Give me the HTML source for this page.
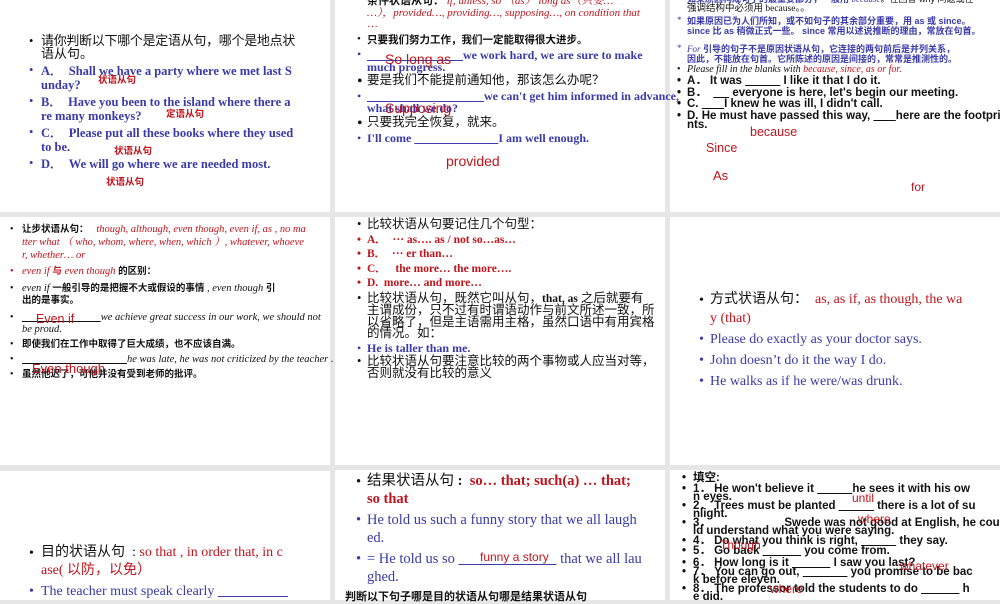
<!DOCTYPE html>
<html><head><meta charset="utf-8"><style>
body{margin:0;width:1000px;height:600px;background:#e6e6e6;position:relative;overflow:hidden;font-family:"Liberation Serif","Noto Serif CJK SC",serif}
.p{position:absolute;background:#fff;overflow:hidden}
.l{position:absolute;white-space:nowrap;line-height:1}
.b{color:#3a3aa8}.r{color:#c0141c}.k{color:#111}
.sans{font-family:"Liberation Sans","Noto Sans CJK SC",sans-serif}
.zh{font-family:"Liberation Serif","Noto Sans CJK SC",sans-serif}
.u{text-decoration:underline}
</style></head><body>
<div class="p" style="left:0;top:0;width:330px;height:212px"></div>
<div class="p" style="left:335px;top:0;width:330px;height:212px"></div>
<div class="p" style="left:670px;top:0;width:330px;height:212px"></div>
<div class="p" style="left:0;top:217px;width:330px;height:248px"></div>
<div class="p" style="left:335px;top:217px;width:330px;height:248px"></div>
<div class="p" style="left:670px;top:217px;width:330px;height:248px"></div>
<div class="p" style="left:0;top:471px;width:330px;height:129px"></div>
<div class="p" style="left:335px;top:470px;width:330px;height:130px"></div>
<div class="p" style="left:670px;top:470px;width:330px;height:130px"></div>

<!-- R1C1 -->
<div style="font-size:12.5px">
<div class="l k" style="left:29px;top:35px">•</div><div class="l k zh" style="left:41px;top:34px;font-size:13px;letter-spacing:-0.3px">请你判断以下哪个是定语从句，哪个是地点状</div>
<div class="l k zh" style="left:41px;top:47px;font-size:13px">语从句。</div>
<div class="l b" style="left:29px;top:64px">•</div><div class="l b" style="left:41px;top:65px;font-weight:bold">A．&nbsp;&nbsp;Shall we have a party where we met last S</div>
<div class="l b" style="left:41px;top:79px;font-weight:bold">unday?</div>
<div class="l b" style="left:29px;top:95px">•</div><div class="l b" style="left:41px;top:96px;font-weight:bold">B．&nbsp;&nbsp;Have you been to the island where there a</div>
<div class="l b" style="left:41px;top:110px;font-weight:bold">re many monkeys?</div>
<div class="l b" style="left:29px;top:126px">•</div><div class="l b" style="left:41px;top:127px;font-weight:bold">C．&nbsp;&nbsp;Please put all these books where they used</div>
<div class="l b" style="left:41px;top:141px;font-weight:bold">to be.</div>
<div class="l b" style="left:29px;top:157px">•</div><div class="l b" style="left:41px;top:158px;font-weight:bold">D．&nbsp;&nbsp;We will go where we are needed most.</div>
<div class="l r sans" style="left:98px;top:76px;font-size:9.5px;font-weight:bold">状语从句</div>
<div class="l r sans" style="left:166px;top:110px;font-size:9.5px;font-weight:bold">定语从句</div>
<div class="l r sans" style="left:114px;top:147px;font-size:9.5px;font-weight:bold">状语从句</div>
<div class="l r sans" style="left:106px;top:178px;font-size:9.5px;font-weight:bold">状语从句</div>
</div>

<!-- R1C2 -->
<div>
<div class="l r" style="left:367px;top:-4px;font-size:11px;font-style:italic"><span class="k sans" style="font-weight:bold;font-style:normal">条件状语从句：</span> if, unless, so （as） long as（只要…</div>
<div class="l r" style="left:367px;top:8px;font-size:11px;font-style:italic">…），provided…, providing…, supposing…, on condition that</div>
<div class="l r" style="left:367px;top:19px;font-size:11px">…</div>
<div class="l k" style="left:357px;top:34px;font-size:11px">•</div><div class="l k sans" style="left:367px;top:35px;font-size:10.5px;font-weight:bold">只要我们努力工作，我们一定能取得很大进步。</div>
<div class="l b" style="left:357px;top:48px;font-size:12px">•</div><div class="l b" style="left:367px;top:49px;font-size:12px;font-weight:bold"><span class="u">&nbsp;&nbsp;&nbsp;&nbsp;&nbsp;&nbsp;&nbsp;&nbsp;&nbsp;&nbsp;&nbsp;&nbsp;&nbsp;&nbsp;&nbsp;&nbsp;&nbsp;&nbsp;&nbsp;&nbsp;&nbsp;&nbsp;&nbsp;&nbsp;&nbsp;&nbsp;&nbsp;&nbsp;&nbsp;&nbsp;&nbsp;&nbsp;</span>we work hard, we are sure to make</div>
<div class="l b" style="left:367px;top:61px;font-size:12px;font-weight:bold">much progress.</div>
<div class="l r sans" style="left:385px;top:52px;font-size:14px">So long as</div>
<div class="l k" style="left:357px;top:74px">•</div><div class="l k zh" style="left:367px;top:74px;font-size:12.5px">要是我们不能提前通知他，那该怎么办呢？</div>
<div class="l b" style="left:357px;top:90px;font-size:12px">•</div><div class="l b" style="left:367px;top:90px;font-size:12px;font-weight:bold"><span class="u">&nbsp;&nbsp;&nbsp;&nbsp;&nbsp;&nbsp;&nbsp;&nbsp;&nbsp;&nbsp;&nbsp;&nbsp;&nbsp;&nbsp;&nbsp;&nbsp;&nbsp;&nbsp;&nbsp;&nbsp;&nbsp;&nbsp;&nbsp;&nbsp;&nbsp;&nbsp;&nbsp;&nbsp;&nbsp;&nbsp;&nbsp;&nbsp;&nbsp;&nbsp;&nbsp;&nbsp;&nbsp;&nbsp;&nbsp;</span>we can't get him informed in advance,</div>
<div class="l b" style="left:367px;top:102px;font-size:12px;font-weight:bold">what shall we do?</div>
<div class="l r sans" style="left:385px;top:101px;font-size:14px">Supposing</div>
<div class="l k" style="left:357px;top:116px">•</div><div class="l k zh" style="left:367px;top:116px;font-size:12.5px">只要我完全恢复，就来。</div>
<div class="l b" style="left:357px;top:132px;font-size:12px">•</div><div class="l b" style="left:367px;top:132px;font-size:12px;font-weight:bold">I'll come <span class="u">&nbsp;&nbsp;&nbsp;&nbsp;&nbsp;&nbsp;&nbsp;&nbsp;&nbsp;&nbsp;&nbsp;&nbsp;&nbsp;&nbsp;&nbsp;&nbsp;&nbsp;&nbsp;&nbsp;&nbsp;&nbsp;&nbsp;&nbsp;&nbsp;&nbsp;&nbsp;&nbsp;&nbsp;</span>I am well enough.</div>
<div class="l r sans" style="left:446px;top:154px;font-size:14px">provided</div>
</div>

<!-- R1C3 -->
<div>
<div class="l b sans" style="left:687px;top:-5px;font-size:9px;font-weight:bold">如果原因构成句子的最重要部分，一般用 <i style="font-family:'Liberation Serif';font-weight:normal">because</i><span class="k" style="font-weight:normal">。在回答 why 问题或在</span></div>
<div class="l k zh" style="left:687px;top:5px;font-size:9.5px">强调结构中必须用 because。。</div>
<div class="l b" style="left:677px;top:16px;font-size:9px">*</div><div class="l b sans" style="left:687px;top:17px;font-size:9px;font-weight:bold">如果原因已为人们所知，或不如句子的其余部分重要，用 as 或 since。</div>
<div class="l b sans" style="left:687px;top:27px;font-size:9px;font-weight:bold">since 比 as 稍微正式一些。 since 常用以述说推断的理由，常放在句首。</div>
<div class="l b" style="left:677px;top:44px;font-size:9px">*</div><div class="l b sans" style="left:687px;top:45px;font-size:9px;font-weight:bold"><i style="font-family:'Liberation Serif';font-weight:normal">For</i> 引导的句子不是原因状语从句，它连接的两句前后是并列关系，</div>
<div class="l b sans" style="left:687px;top:55px;font-size:9px;font-weight:bold">因此，不能放在句首。它所陈述的原因是间接的，常常是推测性的。</div>
<div class="l k" style="left:677px;top:65px;font-size:10px">•</div><div class="l k" style="left:687px;top:65px;font-size:10px;font-style:italic">Please fill in the blanks with <span class="r">because, since, as or for.</span></div>
<div class="sans k" style="font-size:11.5px;font-weight:bold">
<div class="l" style="left:677px;top:76px">•</div><div class="l" style="left:687px;top:76px">A．&nbsp;It was <span class="u">&nbsp;&nbsp;&nbsp;&nbsp;&nbsp;&nbsp;&nbsp;&nbsp;&nbsp;&nbsp;&nbsp;</span> I like it that I do it.</div>
<div class="l" style="left:677px;top:88px">•</div><div class="l" style="left:687px;top:88px">B．&nbsp;&nbsp;<span class="u">&nbsp;&nbsp;&nbsp;&nbsp;&nbsp;</span> everyone is here, let's begin our meeting.</div>
<div class="l" style="left:677px;top:99px">•</div><div class="l" style="left:687px;top:99px">C. <span class="u">&nbsp;&nbsp;&nbsp;&nbsp;&nbsp;&nbsp;&nbsp;</span>I knew he was ill, I didn't call.</div>
<div class="l" style="left:677px;top:111px">•</div><div class="l" style="left:687px;top:111px">D. He must have passed this way, <span class="u">&nbsp;&nbsp;&nbsp;&nbsp;&nbsp;&nbsp;&nbsp;</span>here are the footpri</div>
<div class="l" style="left:687px;top:120px">nts.</div>
</div>
<div class="l r sans" style="left:750px;top:126px;font-size:12.5px">because</div>
<div class="l r sans" style="left:706px;top:142px;font-size:12.5px">Since</div>
<div class="l r sans" style="left:713px;top:169px;font-size:13px">As</div>
<div class="l r sans" style="left:911px;top:181px;font-size:12px">for</div>
</div>

<!-- R2C1 -->
<div>
<div class="l k" style="left:10px;top:225px;font-size:10px">•</div><div class="l r" style="left:22px;top:225px;font-size:10.5px;font-style:italic"><span class="k sans" style="font-weight:bold;font-style:normal;font-size:9.5px">让步状语从句：</span> &nbsp; though, although, even though, even if, as , no ma</div>
<div class="l r" style="left:22px;top:238px;font-size:10.5px;font-style:italic">tter what （ who, whom, where, when, which ）, whatever, whoeve</div>
<div class="l r" style="left:22px;top:251px;font-size:10.5px;font-style:italic">r, whether… or</div>
<div class="l r" style="left:10px;top:267px;font-size:10px">•</div><div class="l r" style="left:22px;top:267px;font-size:10.5px;font-style:italic">even if <span class="sans" style="font-style:normal;font-size:9.5px;font-weight:bold">与</span> even though <span class="k sans" style="font-style:normal;font-size:9.5px;font-weight:bold">的区别：</span></div>
<div class="l k" style="left:10px;top:284px;font-size:10px">•</div><div class="l k" style="left:22px;top:284px;font-size:10.5px;font-style:italic">even if <span class="sans" style="font-style:normal;font-size:9.5px;font-weight:bold">一般引导的是把握不大或假设的事情</span> , even though <span class="sans" style="font-style:normal;font-size:9.5px;font-weight:bold">引</span></div>
<div class="l k sans" style="left:22px;top:296px;font-size:9.5px;font-weight:bold">出的是事实。</div>
<div class="l k" style="left:10px;top:313px;font-size:10px">•</div><div class="l k" style="left:22px;top:313px;font-size:10.5px;font-style:italic"><span class="u">&nbsp;&nbsp;&nbsp;&nbsp;&nbsp;&nbsp;&nbsp;&nbsp;&nbsp;&nbsp;&nbsp;&nbsp;&nbsp;&nbsp;&nbsp;&nbsp;&nbsp;&nbsp;&nbsp;&nbsp;&nbsp;&nbsp;&nbsp;&nbsp;&nbsp;&nbsp;&nbsp;&nbsp;&nbsp;&nbsp;</span>we achieve great success in our work, we should not</div>
<div class="l k" style="left:22px;top:325px;font-size:10.5px;font-style:italic">be proud.</div>
<div class="l r sans" style="left:36px;top:313px;font-size:12.5px">Even if</div>
<div class="l k" style="left:10px;top:340px;font-size:10px">•</div><div class="l k sans" style="left:22px;top:340px;font-size:9.5px;font-weight:bold">即使我们在工作中取得了巨大成绩，也不应该自满。</div>
<div class="l k" style="left:10px;top:355px;font-size:10px">•</div><div class="l k" style="left:22px;top:355px;font-size:10.5px;font-style:italic"><span class="u">&nbsp;&nbsp;&nbsp;&nbsp;&nbsp;&nbsp;&nbsp;&nbsp;&nbsp;&nbsp;&nbsp;&nbsp;&nbsp;&nbsp;&nbsp;&nbsp;&nbsp;&nbsp;&nbsp;&nbsp;&nbsp;&nbsp;&nbsp;&nbsp;&nbsp;&nbsp;&nbsp;&nbsp;&nbsp;&nbsp;&nbsp;&nbsp;&nbsp;&nbsp;&nbsp;&nbsp;&nbsp;&nbsp;&nbsp;&nbsp;</span>he was late, he was not criticized by the teacher .</div>
<div class="l k" style="left:10px;top:370px;font-size:10px">•</div><div class="l k sans" style="left:22px;top:370px;font-size:9.5px;font-weight:bold">虽然他迟了，可他并没有受到老师的批评。</div>
<div class="l r sans" style="left:32px;top:362px;font-size:13px">Even though</div>
</div>

<!-- R2C2 -->
<div>
<div class="zh k" style="font-size:12.5px">
<div class="l" style="left:357px;top:218px">•</div><div class="l" style="left:367px;top:218px">比较状语从句要记住几个句型：</div>
</div>
<div class="r" style="font-size:11.5px;font-weight:bold">
<div class="l" style="left:357px;top:235px">•</div><div class="l" style="left:367px;top:235px">A．&nbsp; ··· as…. as / not so…as…</div>
<div class="l" style="left:357px;top:249px">•</div><div class="l" style="left:367px;top:249px">B．&nbsp; ··· er than…</div>
<div class="l" style="left:357px;top:264px">•</div><div class="l" style="left:367px;top:264px">C．&nbsp;&nbsp; the more… the more….</div>
<div class="l" style="left:357px;top:278px">•</div><div class="l" style="left:367px;top:278px">D.&nbsp; more… and more…</div>
</div>
<div class="zh k" style="font-size:12.5px">
<div class="l" style="left:357px;top:292px">•</div><div class="l" style="left:367px;top:292px">比较状语从句，既然它叫从句，<b style="font-size:11.5px">that, as</b> 之后就要有</div>
<div class="l" style="left:367px;top:304px">主谓成份，只不过有时谓语动作与前文所述一致，所</div>
<div class="l" style="left:367px;top:316px">以省略了，但是主语需用主格，虽然口语中有用宾格</div>
<div class="l" style="left:367px;top:327px">的情况。如：</div>
</div>
<div class="l b" style="left:357px;top:342px;font-size:12px">•</div><div class="l b" style="left:367px;top:342px;font-size:12px;font-weight:bold">He is taller than me.</div>
<div class="zh k" style="font-size:12.5px">
<div class="l" style="left:357px;top:355px">•</div><div class="l" style="left:367px;top:355px">比较状语从句要注意比较的两个事物或人应当对等，</div>
<div class="l" style="left:367px;top:367px">否则就没有比较的意义</div>
</div>
</div>

<!-- R2C3 -->
<div style="font-size:14px">
<div class="l k" style="left:699px;top:294px">•</div><div class="l k zh" style="left:710px;top:293px">方式状语从句： &nbsp;<span class="r" style="font-family:'Liberation Serif'">as, as if, as though, the wa</span></div>
<div class="l r" style="left:710px;top:312px">y (that)</div>
<div class="l b" style="left:699px;top:333px">•</div><div class="l b" style="left:710px;top:333px">Please do exactly as your doctor says.</div>
<div class="l b" style="left:699px;top:354px">•</div><div class="l b" style="left:710px;top:354px">John doesn’t do it the way I do.</div>
<div class="l b" style="left:699px;top:375px">•</div><div class="l b" style="left:710px;top:375px">He walks as if he were/was drunk.</div>
</div>

<!-- R3C1 -->
<div style="font-size:14px">
<div class="l k" style="left:29px;top:547px">•</div><div class="l k zh" style="left:41px;top:546px">目的状语从句 &nbsp;:<span class="r" style="font-family:'Liberation Serif'"> so that , in order that, in c</span></div>
<div class="l r zh" style="left:41px;top:564px"><span style="font-family:'Liberation Serif'">ase(</span> 以防，以免）</div>
<div class="l b" style="left:29px;top:585px">•</div><div class="l b" style="left:41px;top:585px">The teacher must speak clearly <span class="u">&nbsp;&nbsp;&nbsp;&nbsp;&nbsp;&nbsp;&nbsp;&nbsp;&nbsp;&nbsp;&nbsp;&nbsp;&nbsp;&nbsp;&nbsp;&nbsp;&nbsp;&nbsp;&nbsp;&nbsp;</span></div>
</div>

<!-- R3C2 -->
<div style="font-size:14.5px">
<div class="l k" style="left:356px;top:475px">•</div><div class="l k zh" style="left:367px;top:474px">结果状语从句 <b>:</b> &nbsp;<b class="r" style="font-family:'Liberation Serif'">so… that; such(a) … that;</b></div>
<div class="l r" style="left:367px;top:492px;font-weight:bold">so that</div>
<div class="l b" style="left:356px;top:513px">•</div><div class="l b" style="left:367px;top:513px">He told us such a funny story that we all laugh</div>
<div class="l b" style="left:367px;top:531px">ed.</div>
<div class="l b" style="left:356px;top:552px">•</div><div class="l b" style="left:367px;top:552px">= He told us so <span class="u">&nbsp;&nbsp;&nbsp;&nbsp;&nbsp;&nbsp;&nbsp;&nbsp;&nbsp;&nbsp;&nbsp;&nbsp;&nbsp;&nbsp;&nbsp;&nbsp;&nbsp;&nbsp;&nbsp;&nbsp;&nbsp;&nbsp;&nbsp;&nbsp;&nbsp;&nbsp;&nbsp;</span> that we all lau</div>
<div class="l r sans" style="left:480px;top:551px;font-size:12px">funny a story</div>
<div class="l b" style="left:367px;top:570px">ghed.</div>
<div class="l k sans" style="left:345px;top:592px;font-size:11px;font-weight:bold">判断以下句子哪是目的状语从句哪是结果状语从句</div>
</div>

<!-- R3C3 -->
<div class="sans k" style="font-size:11.5px;font-weight:bold">
<div class="l" style="left:682px;top:473px">•</div><div class="l" style="left:693px;top:473px">填空:</div>
<div class="l" style="left:682px;top:484px">•</div><div class="l" style="left:693px;top:484px">1．&nbsp;He won't believe it <span class="u">&nbsp;&nbsp;&nbsp;&nbsp;&nbsp;&nbsp;&nbsp;&nbsp;&nbsp;&nbsp;&nbsp;</span>he sees it with his ow</div>
<div class="l" style="left:693px;top:492px">n eyes.</div>
<div class="l" style="left:682px;top:501px">•</div><div class="l" style="left:693px;top:501px">2．&nbsp;Trees must be planted <span class="u">&nbsp;&nbsp;&nbsp;&nbsp;&nbsp;&nbsp;&nbsp;&nbsp;&nbsp;&nbsp;&nbsp;</span> there is a lot of su</div>
<div class="l" style="left:693px;top:509px">nlight.</div>
<div class="l" style="left:682px;top:518px">•</div><div class="l" style="left:693px;top:518px">3．&nbsp;&nbsp;&nbsp;&nbsp;&nbsp;&nbsp;&nbsp;&nbsp;&nbsp;&nbsp;&nbsp;&nbsp;&nbsp;&nbsp;&nbsp;&nbsp;&nbsp;&nbsp;&nbsp;&nbsp;&nbsp;&nbsp;&nbsp;Swede was not good at English, he cou</div>
<div class="l" style="left:693px;top:526px">ld understand what you were saying.</div>
<div class="l" style="left:682px;top:536px">•</div><div class="l" style="left:693px;top:536px">4．&nbsp;Do what you think is right, <span class="u">&nbsp;&nbsp;&nbsp;&nbsp;&nbsp;&nbsp;&nbsp;&nbsp;&nbsp;&nbsp;&nbsp;</span> they say.</div>
<div class="l" style="left:682px;top:546px">•</div><div class="l" style="left:693px;top:546px">5．&nbsp;Go back <span class="u">&nbsp;&nbsp;&nbsp;&nbsp;&nbsp;&nbsp;&nbsp;&nbsp;&nbsp;&nbsp;&nbsp;&nbsp;</span> you come from.</div>
<div class="l" style="left:682px;top:558px">•</div><div class="l" style="left:693px;top:558px">6．&nbsp;How long is it <span class="u">&nbsp;&nbsp;&nbsp;&nbsp;&nbsp;&nbsp;&nbsp;&nbsp;&nbsp;&nbsp;&nbsp;&nbsp;</span> I saw you last?</div>
<div class="l" style="left:682px;top:567px">•</div><div class="l" style="left:693px;top:567px">7．&nbsp;You can go out, <span class="u">&nbsp;&nbsp;&nbsp;&nbsp;&nbsp;&nbsp;&nbsp;&nbsp;&nbsp;&nbsp;&nbsp;&nbsp;&nbsp;&nbsp;</span> you promise to be bac</div>
<div class="l" style="left:693px;top:575px">k before eleven.</div>
<div class="l" style="left:682px;top:584px">•</div><div class="l" style="left:693px;top:584px">8．&nbsp;The professor told the students to do <span class="u">&nbsp;&nbsp;&nbsp;&nbsp;&nbsp;&nbsp;&nbsp;&nbsp;&nbsp;&nbsp;&nbsp;&nbsp;</span> h</div>
<div class="l" style="left:693px;top:592px">e did.</div>
</div>
<div class="sans r" style="font-size:12px">
<div class="l" style="left:852px;top:492px">until</div>
<div class="l" style="left:858px;top:513px">where</div>
<div class="l" style="left:720px;top:539px">Though</div>
<div class="l" style="left:900px;top:560px">whatever</div>
<div class="l" style="left:770px;top:583px">where</div>
</div>
</body></html>
